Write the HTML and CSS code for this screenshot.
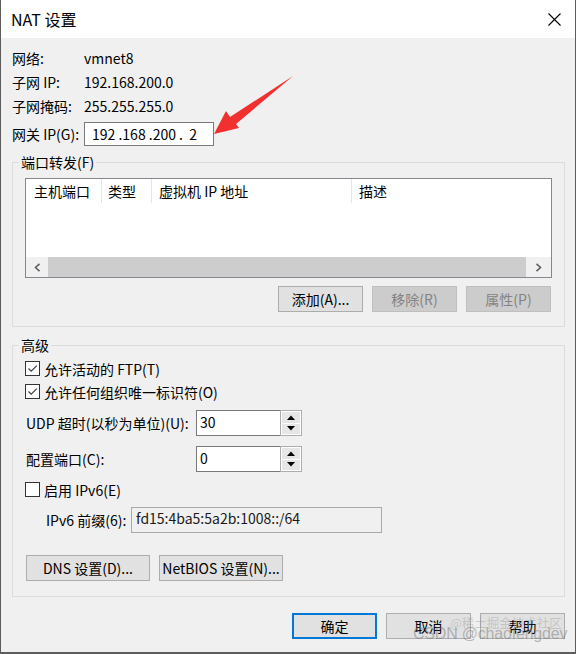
FILE: index.html
```html
<!DOCTYPE html>
<html lang="zh-CN">
<head>
<meta charset="utf-8">
<title>NAT 设置</title>
<link rel="stylesheet" href="styles.css">
</head>
<body>
<div class="window">
  <div class="titlebar">
    <span class="title">NAT 设置</span>
    <svg class="close" width="13" height="13" viewBox="0 0 13 13"><path d="M0.5 0.5 L12.5 12.5 M12.5 0.5 L0.5 12.5" stroke="#000" stroke-width="1.1" fill="none"/></svg>
  </div>
  <div class="content">
    <div class="info-row"><span class="lbl">网络:</span><span>vmnet8</span></div>
    <div class="info-row"><span class="lbl">子网 IP:</span><span>192.168.200.0</span></div>
    <div class="info-row"><span class="lbl">子网掩码:</span><span>255.255.255.0</span></div>
    <div class="info-row gw"><span class="lbl">网关 IP(G):</span><div class="ipbox">192 .168 .200 .  2</div></div>

    <fieldset class="group g1">
      <legend>端口转发(F)</legend>
      <div class="list">
        <div class="lhead">
          <div class="col c1">主机端口</div>
          <div class="col c2">类型</div>
          <div class="col c3">虚拟机 IP 地址</div>
          <div class="col c4">描述</div>
        </div>
        <div class="lbody"></div>
        <div class="hscroll">
          <span class="sarr left"><svg width="7" height="9" viewBox="0 0 7 9"><path d="M5.5 0.8 L1.5 4.5 L5.5 8.2" stroke="#606060" stroke-width="1.6" fill="none"/></svg></span>
          <span class="thumb"></span>
          <span class="sarr right"><svg width="7" height="9" viewBox="0 0 7 9"><path d="M1.5 0.8 L5.5 4.5 L1.5 8.2" stroke="#606060" stroke-width="1.6" fill="none"/></svg></span>
        </div>
      </div>
      <div class="btnrow">
        <button class="btn">添加(A)...</button>
        <button class="btn disabled">移除(R)</button>
        <button class="btn disabled">属性(P)</button>
      </div>
    </fieldset>

    <fieldset class="group g2">
      <legend>高级</legend>
      <div class="chk first"><span class="box"><svg width="13" height="13" viewBox="0 0 13 13"><path d="M2.5 6.5 L5.2 9.2 L10.8 3.6" stroke="#444" stroke-width="1.3" fill="none"/></svg></span><span class="ctext">允许活动的 FTP(T)</span></div>
      <div class="chk"><span class="box"><svg width="13" height="13" viewBox="0 0 13 13"><path d="M2.5 6.5 L5.2 9.2 L10.8 3.6" stroke="#444" stroke-width="1.3" fill="none"/></svg></span><span class="ctext">允许任何组织唯一标识符(O)</span></div>

      <div class="frow udp"><span class="flbl">UDP 超时(以秒为单位)(U):</span>
        <div class="spin"><div class="spin-field">30</div>
          <div class="updown"><span class="ud"><svg width="8" height="5" viewBox="0 0 8 5"><path d="M0 5 L4 0.5 L8 5Z" fill="#000"/></svg></span><span class="ud"><svg width="8" height="5" viewBox="0 0 8 5"><path d="M0 0 L4 4.5 L8 0Z" fill="#000"/></svg></span></div>
        </div>
      </div>
      <div class="frow port"><span class="flbl">配置端口(C):</span>
        <div class="spin"><div class="spin-field">0</div>
          <div class="updown"><span class="ud"><svg width="8" height="5" viewBox="0 0 8 5"><path d="M0 5 L4 0.5 L8 5Z" fill="#000"/></svg></span><span class="ud"><svg width="8" height="5" viewBox="0 0 8 5"><path d="M0 0 L4 4.5 L8 0Z" fill="#000"/></svg></span></div>
        </div>
      </div>

      <div class="chk v6"><span class="box"></span><span class="ctext">启用 IPv6(E)</span></div>
      <div class="frow prefix"><span class="plbl">IPv6 前缀(6):</span><div class="ro-field">fd15:4ba5:5a2b:1008::/64</div></div>

      <div class="dnsrow">
        <button class="btn wide">DNS 设置(D)...</button>
        <button class="btn wide">NetBIOS 设置(N)...</button>
      </div>
    </fieldset>

    <div class="footer">
      <button class="btn default">确定</button>
      <button class="btn">取消</button>
      <button class="btn">帮助</button>
    </div>
  </div>

  <svg class="arrow" width="576" height="654" viewBox="0 0 576 654"><polygon points="213,134 225,111 229,117 292,76 235,124 238,128" fill="#f2302f"/></svg>
  <div class="wm-cn">@稀土掘金技术社区</div>
  <div class="wm">CSDN @chaofengdev</div>
</div>
</body>
</html>
```

FILE: styles.css
```css
* { box-sizing: border-box; }
html, body { margin: 0; padding: 0; }
body {
  font-family: "Noto Sans CJK SC", "Noto Sans", sans-serif;
  font-size: 14px;
  color: #000;
  background: #f0f0f0;
}
.window {
  position: relative;
  width: 576px;
  height: 654px;
  border-left: 1px solid #5c5c5c;
  border-right: 1px solid #5c5c5c;
  border-bottom: 2px solid #5c5c5c;
  background: #f0f0f0;
  overflow: hidden;
}
.titlebar {
  height: 38px;
  background: #fff;
  display: flex;
  align-items: center;
  justify-content: space-between;
  padding: 0 14px 0 10px;
}
.title { font-size: 16px; line-height: 20px; }
.close { display: block; }

.content { padding: 8px 10px 0 11px; }
.info-row { display: flex; align-items: center; height: 24px; line-height: 20px; }
.lbl { width: 72px; }
.gw { margin-top: 4px; }
.ipbox {
  width: 130px;
  height: 24px;
  border: 1px solid #7a7a7a;
  background: #fff;
  display: flex;
  align-items: center;
  padding-left: 7px;
  white-space: pre;
}

fieldset.group {
  margin: 8px 0 0;
  border: 1px solid #dcdcdc;
  padding: 0 12px 14px 12px;
  min-width: 0;
}
fieldset.g2 { margin-top: 10px; padding-bottom: 15px; }
legend {
  padding: 0 2px;
  margin-left: -6px;
  line-height: 16px;
}

.list {
  margin-top: 8px;
  height: 100px;
  border: 1px solid #828790;
  background: #fff;
  display: flex;
  flex-direction: column;
}
.lhead { height: 25px; display: flex; }
.col { line-height: 24px; height: 24px; margin-top: 0; }
.c1 { width: 75px; padding-left: 8px; }
.c2 { width: 50px; padding-left: 6px; border-left: 1px solid #e5e5e5; }
.c3 { width: 200px; padding-left: 7px; border-left: 1px solid #e5e5e5; }
.c4 { flex: 1; padding-left: 7px; border-left: 1px solid #e5e5e5; }
.lbody { flex: 1; }
.hscroll { height: 20px; display: flex; background: #f0f0f0; }
.sarr { display: flex; align-items: center; justify-content: center; }
.sarr.left { width: 22px; }
.sarr.right { width: 25px; }
.thumb { flex: 1; background: #cdcdcd; }

.btn {
  height: 26px;
  border: 1px solid #adadad;
  background: #e1e1e1;
  font-family: inherit;
  font-size: 14px;
  color: #000;
  padding: 0;
  margin: 0;
  display: flex;
  align-items: center;
  justify-content: center;
  width: 85px;
}
.btn.disabled { background: #cccccc; border-color: #bfbfbf; color: #838383; }
.btn.default { border: 2px solid #0078d7; }
.btn.wide { width: 124px; }

.btnrow { margin-top: 8px; display: flex; justify-content: flex-end; gap: 9px; padding-right: 1px; }

.chk { display: flex; align-items: center; height: 23px; }
.chk.first { margin-top: 4px; }
.chk.v6 { margin-top: 6px; }
.box {
  width: 15px;
  height: 15px;
  border: 1px solid #333;
  background: #fff;
  display: flex;
  align-items: center;
  justify-content: center;
}
.ctext { margin-left: 4px; line-height: 20px; }

.frow { display: flex; align-items: center; height: 26px; }
.frow.udp { margin-top: 7px; }
.frow.port { margin-top: 10px; }
.frow.prefix { margin-top: 6px; padding-left: 21px; }
.flbl { width: 171px; padding-left: 1px; }
.plbl { width: 85px; }
.spin { display: flex; }
.spin-field {
  width: 84px;
  height: 26px;
  border: 1px solid #7a7a7a;
  border-right: none;
  background: #fff;
  display: flex;
  align-items: center;
  padding: 0 0 3px 3px;
}
.updown {
  width: 22px;
  height: 26px;
  border: 1px solid #adadad;
  background: #fff;
  display: flex;
  flex-direction: column;
  padding: 1px;
  gap: 1px;
}
.ud {
  flex: 1;
  background: #e6e6e6;
  display: flex;
  align-items: center;
  justify-content: center;
}
.ro-field {
  width: 251px;
  height: 26px;
  border: 1px solid #a9a9a9;
  background: #f0f0f0;
  color: #1a1a1a;
  display: flex;
  align-items: center;
  padding: 0 0 4px 4px;
}

.dnsrow { margin-top: 22px; display: flex; gap: 9px; padding-left: 1px; }

.footer { margin-top: 16px; display: flex; justify-content: flex-end; gap: 9px; }

.arrow { position: absolute; left: 0; top: 0; pointer-events: none; }
.wm {
  position: absolute;
  left: 412px;
  top: 624px;
  font-family: "Liberation Sans", sans-serif;
  font-size: 16px;
  line-height: 20px;
  letter-spacing: -0.2px;
  color: rgba(110, 110, 110, 0.45);
  white-space: nowrap;
}
.wm-cn {
  position: absolute;
  left: 449px;
  top: 615px;
  font-size: 12.5px;
  line-height: 16px;
  color: rgba(140, 140, 140, 0.35);
  white-space: nowrap;
}
```
